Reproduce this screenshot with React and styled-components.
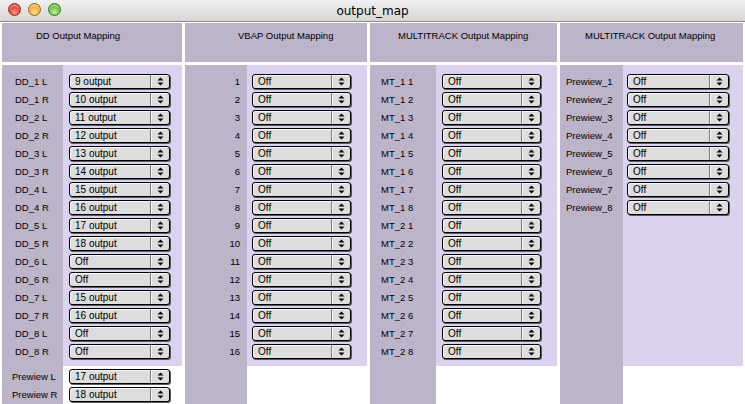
import React from "react";
import styled, { createGlobalStyle } from "styled-components";

const DARK = "#bcb4c8";
const LIGHT = "#dad2ee";

const GlobalStyle = createGlobalStyle`
  html, body {
    margin: 0;
    padding: 0;
    background: #ffffff;
  }
  body {
    font-family: "Liberation Sans", Arial, sans-serif;
    color: #000000;
  }
`;

const ddRows = [
  ["DD_1 L", "9 output"],
  ["DD_1 R", "10 output"],
  ["DD_2 L", "11 output"],
  ["DD_2 R", "12 output"],
  ["DD_3 L", "13 output"],
  ["DD_3 R", "14 output"],
  ["DD_4 L", "15 output"],
  ["DD_4 R", "16 output"],
  ["DD_5 L", "17 output"],
  ["DD_5 R", "18 output"],
  ["DD_6 L", "Off"],
  ["DD_6 R", "Off"],
  ["DD_7 L", "15 output"],
  ["DD_7 R", "16 output"],
  ["DD_8 L", "Off"],
  ["DD_8 R", "Off"],
];

const ddExtra = [
  ["Prewiew L", "17 output"],
  ["Prewiew R", "18 output"],
];

const vbapRows = Array.from({ length: 16 }, (_, i) => [String(i + 1), "Off"]);

const mtRows = Array.from({ length: 16 }, (_, i) => [
  `MT_${i < 8 ? 1 : 2} ${(i % 8) + 1}`,
  "Off",
]);

const previewRows = Array.from({ length: 8 }, (_, i) => [`Prewiew_${i + 1}`, "Off"]);

const sections = [
  {
    title: "DD Output Mapping",
    width: 180,
    titlePad: 34,
    labelWidth: 61,
    labelPad: 13,
    popupPad: 6,
    popupWidth: 101,
    rows: ddRows,
    extra: ddExtra,
    extraLabelPad: 10,
  },
  {
    title: "VBAP Output Mapping",
    width: 182,
    titlePad: 53,
    labelWidth: 62,
    labelPad: 7,
    alignRight: true,
    popupPad: 5,
    popupWidth: 99,
    rows: vbapRows,
  },
  {
    title: "MULTITRACK Output Mapping",
    width: 187,
    titlePad: 28,
    labelWidth: 66,
    labelPad: 11,
    popupPad: 6,
    popupWidth: 99,
    rows: mtRows,
  },
  {
    title: "MULTITRACK Output Mapping",
    width: 183,
    titlePad: 25,
    labelWidth: 63,
    labelPad: 6,
    popupPad: 4,
    popupWidth: 102,
    rows: previewRows,
  },
];

const Arrows = () => (
  <svg width="7" height="9" viewBox="0 0 7 9">
    <path d="M3.5 0.5 L6.5 3.5 L0.5 3.5 Z" fill="#000" />
    <path d="M0.5 5.5 L6.5 5.5 L3.5 8.5 Z" fill="#000" />
  </svg>
);

const Popup = ({ value, width }) => (
  <PopupBox $w={width}>
    <PopupText>{value}</PopupText>
    <PopupArrow>
      <Arrows />
    </PopupArrow>
  </PopupBox>
);

const Section = ({ s }) => (
  <Column $w={s.width}>
    <Header $pad={s.titlePad}>{s.title}</Header>
    <Body>
      <LabelCol $w={s.labelWidth}>
        {s.rows.map(([label]) => (
          <Label key={label} $pad={s.labelPad} $right={s.alignRight}>
            {label}
          </Label>
        ))}
        {s.extra && <LabelSpacer />}
        {s.extra &&
          s.extra.map(([label]) => (
            <Label key={label} $pad={s.extraLabelPad}>
              {label}
            </Label>
          ))}
      </LabelCol>
      <ControlCol>
        <Panel $pad={s.popupPad}>
          {s.rows.map(([label, value]) => (
            <Cell key={label}>
              <Popup value={value} width={s.popupWidth} />
            </Cell>
          ))}
        </Panel>
        {s.extra && (
          <Extra $pad={s.popupPad}>
            {s.extra.map(([label, value]) => (
              <Cell key={label}>
                <Popup value={value} width={s.popupWidth} />
              </Cell>
            ))}
          </Extra>
        )}
      </ControlCol>
    </Body>
  </Column>
);

export default function App() {
  return (
    <>
      <GlobalStyle />
      <Window>
        <TitleBar>
          <Lights>
            <Light $c1="#ff9a8e" $c2="#d8241a" $b="#8e1f18" />
            <Light $c1="#ffe29a" $c2="#e89a12" $b="#a0620e" />
            <Light $c1="#c8f5a0" $c2="#4eae26" $b="#2f7416" />
          </Lights>
          <Title>output_map</Title>
        </TitleBar>
        <Columns>
          {sections.map((s, i) => (
            <Section key={i} s={s} />
          ))}
        </Columns>
      </Window>
    </>
  );
}

const Window = styled.div`
  width: 745px;
  height: 404px;
  overflow: hidden;
  display: flex;
  flex-direction: column;
  background: #ffffff;
`;

const TitleBar = styled.div`
  position: relative;
  height: 21px;
  flex-shrink: 0;
  display: flex;
  align-items: center;
  justify-content: center;
  background: linear-gradient(#f1f1f1, #d6d6d6);
  border-bottom: 1px solid #8c8c8c;
`;

const Lights = styled.div`
  position: absolute;
  left: 8px;
  top: 3px;
  display: flex;
  gap: 7px;
`;

const Light = styled.div`
  width: 13px;
  height: 13px;
  border-radius: 50%;
  border: 1px solid ${(p) => p.$b};
  box-sizing: border-box;
  background: radial-gradient(circle at 50% 75%, ${(p) => p.$c1} 0%, ${(p) => p.$c2} 70%);
  box-shadow: inset 0 2px 2px rgba(255, 255, 255, 0.5);
`;

const Title = styled.div`
  font-family: "DejaVu Sans", "Liberation Sans", sans-serif;
  font-size: 12px;
  color: #000000;
`;

const Columns = styled.div`
  flex: 1;
  display: flex;
  gap: 3px;
  padding: 1px 2px 0;
  min-height: 0;
`;

const Column = styled.div`
  width: ${(p) => p.$w}px;
  flex-shrink: 0;
  display: flex;
  flex-direction: column;
`;

const Header = styled.div`
  height: 39px;
  box-sizing: border-box;
  background: ${DARK};
  padding: 7px 0 0 ${(p) => p.$pad}px;
  font-size: 9.5px;
  white-space: nowrap;
`;

const Body = styled.div`
  flex: 1;
  margin-top: 3px;
  display: flex;
`;

const LabelCol = styled.div`
  width: ${(p) => p.$w}px;
  flex-shrink: 0;
  background: ${DARK};
  padding-top: 7px;
  display: flex;
  flex-direction: column;
`;

const Label = styled.div`
  height: 18px;
  display: flex;
  align-items: center;
  justify-content: ${(p) => (p.$right ? "flex-end" : "flex-start")};
  padding: ${(p) => (p.$right ? `0 ${p.$pad}px 0 0` : `0 0 0 ${p.$pad}px`)};
  font-size: 9.5px;
  white-space: nowrap;
`;

const LabelSpacer = styled.div`
  height: 7px;
`;

const ControlCol = styled.div`
  flex: 1;
  display: flex;
  flex-direction: column;
`;

const Panel = styled.div`
  height: 301px;
  box-sizing: border-box;
  background: ${LIGHT};
  padding: 8px 0 0 ${(p) => p.$pad}px;
`;

const Extra = styled.div`
  margin-top: 2px;
  padding-left: ${(p) => p.$pad}px;
`;

const Cell = styled.div`
  height: 18px;
  display: flex;
  align-items: flex-start;
  padding-top: 1px;
  box-sizing: border-box;
`;

const PopupBox = styled.div`
  width: ${(p) => p.$w}px;
  height: 15px;
  box-sizing: border-box;
  display: flex;
  border: 1px solid #000000;
  border-radius: 3px;
  background: #dddddd;
  box-shadow: 1px 1px 0 #5a5a5a, inset 1px 1px 0 #f6f6f6;
  overflow: hidden;
`;

const PopupText = styled.div`
  flex: 1;
  padding-left: 5px;
  font-size: 10px;
  line-height: 13px;
  white-space: nowrap;
`;

const PopupArrow = styled.div`
  width: 18px;
  flex-shrink: 0;
  display: flex;
  align-items: center;
  justify-content: center;
  border-left: 1px solid #7a7a7a;
  box-shadow: inset 1px 0 0 #f6f6f6;
`;
